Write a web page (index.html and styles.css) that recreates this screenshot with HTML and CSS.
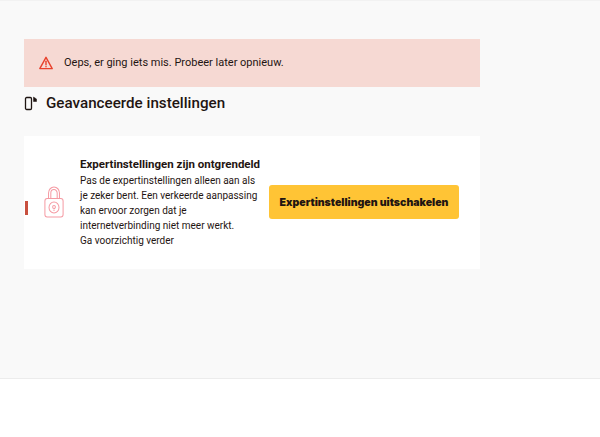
FILE: index.html
```html
<!DOCTYPE html>
<html lang="nl">
<head>
  <meta charset="utf-8" />
  <meta name="viewport" content="width=device-width, initial-scale=1.0"/>
  <title>Geavanceerde instellingen</title>
  <link rel="stylesheet" href="styles.css">
</head>
<body>

  <main class="content">
    <div class="alert" role="alert">
      <svg class="alert-icon" viewBox="0 0 14 14" width="14" height="14" fill="none" stroke="#e8412c" stroke-width="1.4" stroke-linejoin="round" stroke-linecap="round">
        <path d="M7 1.3 13.2 12.6H.8Z"/>
        <path d="M7 5.2v3.6"/>
        <path d="M7 10.4v.4"/>
      </svg>
      <span>Oeps, er ging iets mis. Probeer later opnieuw.</span>
    </div>

    <h1 class="title">
      <svg class="title-icon" viewBox="0 0 14 16" width="14" height="16" fill="none" stroke="#1f1512">
        <rect x="1.5" y="2.5" width="6" height="12" rx="1.2" stroke-width="1.3"/>
        <path d="M9.5 2 12.5 4v2.5h-3Z" fill="#1f1512" stroke-width=".5"/>
      </svg>
      Geavanceerde instellingen
    </h1>

    <section class="card">
      <span class="card-mark"></span>
      <svg class="lock" viewBox="0 0 22 32" width="20" height="32" fill="none" stroke="#f59aa3" stroke-width="1.1" preserveAspectRatio="none">
        <path d="M5 13V7a6 6 0 0 1 12 0v6"/>
        <path d="M7.5 13V7a3.5 3.5 0 0 1 7 0v6"/>
        <rect x="1" y="12.5" width="20" height="18.5" rx="2.5"/>
        <circle cx="11" cy="21.5" r="5.5"/>
        <path d="M11 23.5v1.5M9.5 21a1.5 1.5 0 1 1 3 0 1.5 1.5 0 0 1-3 0Z"/>
      </svg>
      <div class="card-text">
        <h2>Expertinstellingen zijn ontgrendeld</h2>
        <p>Pas de expertinstellingen alleen aan als je zeker bent. Een verkeerde aanpassing kan ervoor zorgen dat je internetverbinding niet meer werkt.<br>Ga voorzichtig verder</p>
      </div>
      <button class="btn">Expertinstellingen uitschakelen</button>
    </section>
  </main>

  <footer class="footer"></footer>

</body>
</html>
```

FILE: styles.css
```css
:root {
  --text: #1f1512;
  --page: #f9f9f9;
  --line: #ececec;
  --alert: #f6d9d3;
  --yellow: #ffc435;
}
*, *::before, *::after { box-sizing: border-box; margin: 0; padding: 0; }
body {
  font-family: Roboto, "Liberation Sans", sans-serif;
  color: var(--text);
  background: #fff;
}

.content {
  height: 379px;
  padding: 38px 0 0 24px;
  background: var(--page);
  border-top: 1px solid #f2f2f2;
  border-bottom: 1px solid var(--line);
}

.alert {
  width: 456px;
  height: 48px;
  padding: 0 0 2px 15px;
  display: flex;
  align-items: center;
  gap: 11px;
  background: var(--alert);
  font-size: 11px;
}
.alert-icon { flex: none; margin-top: 2px; }

.title {
  display: flex;
  align-items: center;
  gap: 8px;
  margin-top: 6px;
  height: 20px;
  font-size: 15.2px;
  font-weight: 500;
}

.card {
  position: relative;
  width: 456px;
  height: 133px;
  margin-top: 23px;
  padding-left: 20px;
  display: flex;
  align-items: center;
  background: #fff;
}
.card-mark {
  position: absolute;
  left: 1px;
  top: 65px;
  width: 3px;
  height: 14px;
  background: #c8503f;
}
.lock { flex: none; margin-bottom: 1px; }
.card-text { width: 178px; margin-left: 16px; margin-bottom: 1px; }
.card-text h2 {
  font-size: 11.5px;
  font-weight: 700;
  line-height: 16px;
  white-space: nowrap;
}
.card-text p {
  font-size: 10px;
  line-height: 15px;
  margin-top: 1px;
}

.btn {
  flex: none;
  width: 190px;
  height: 34px;
  margin-left: 11px;
  margin-bottom: 1px;
  border: none;
  border-radius: 3px;
  background: var(--yellow);
  color: var(--text);
  font-family: Inter, "Liberation Sans", sans-serif;
  font-size: 10.55px;
  font-weight: 900;
  cursor: pointer;
}

.footer { height: 58px; background: #fff; }
```
